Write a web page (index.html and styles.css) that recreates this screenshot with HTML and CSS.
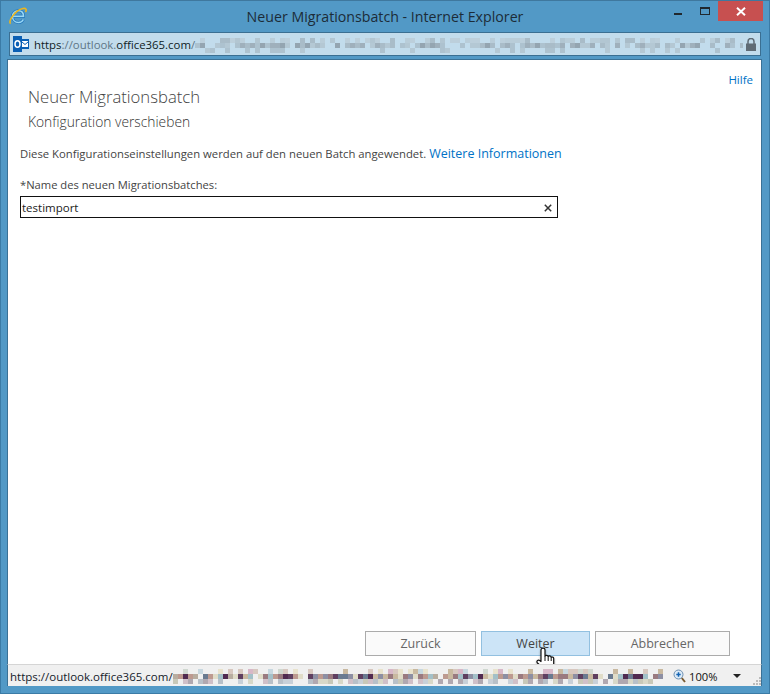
FILE: index.html
```html
<!DOCTYPE html>
<html lang="de">
<head>
<meta charset="utf-8">
<title>Neuer Migrationsbatch - Internet Explorer</title>
<link rel="stylesheet" href="styles.css">
</head>
<body>
<div class="window">
  <header class="titlebar">
    <div class="tb-left">
      <svg class="ie-icon" width="18" height="18" viewBox="0 0 18 18"><path d="M4 9.200h10.500C14.500 5.700 12.500 3.700 9.500 3.700 6 3.700 3.500 6.200 3.500 9.500c0 3.500 2.500 6 6 6 2.300 0 4-1.200 4.800-3" fill="none" stroke="#2478bd" stroke-width="3"/><path d="M4 9.200h10.500C14.500 5.700 12.500 3.700 9.500 3.700 6 3.700 3.500 6.200 3.500 9.500c0 3.500 2.500 6 6 6 2.300 0 4-1.200 4.800-3" fill="none" stroke="#9ad8f5" stroke-width="1.500"/><path d="M1.600 16.600C-1 14.500 6 3.200 14 1.500c3-.6 4 1 2.500 3.500" fill="none" stroke="#eeb61c" stroke-width="1.600"/></svg>
    </div>
    <h1 class="tb-title">Neuer Migrationsbatch - Internet Explorer</h1>
    <div class="tb-controls">
      <span class="ctl-min"></span>
      <span class="ctl-max"></span>
      <span class="ctl-close"><svg width="10" height="9" viewBox="0 0 10 9"><path d="M1 .8l8 7.400M9 .8L1 8.200" stroke="#fff" stroke-width="2"/></svg></span>
    </div>
  </header>

  <div class="addressbar">
    <svg class="o365" width="16" height="16" viewBox="0 0 16 16"><rect x="6" y="3" width="10" height="10" fill="#0a5fb4"/><rect x="9" y="5" width="6" height="6" fill="#fff"/><path d="M9 6l3 2.500L15 6" fill="none" stroke="#0a5fb4"/><rect width="9" height="16" fill="#0a5fb4"/><ellipse cx="4.500" cy="8" rx="2.500" ry="3.300" fill="none" stroke="#fff" stroke-width="1.500"/></svg>
    <span class="url"><span class="u-dark">https</span><span class="u-dim">://outlook.</span><span class="u-dark">office365.com</span><span class="u-dim">/</span></span>
    <div class="mosaic mosaic-addr" id="addr-mosaic"></div>
    <svg class="lock" width="10" height="13" viewBox="0 0 10 13"><path d="M2 6V3.500a3 3 0 0 1 6 0V6" fill="none" stroke="#5f6b75" stroke-width="1.500"/><rect y="5.500" width="10" height="7.500" fill="#5f6b75"/></svg>
  </div>

  <main class="content">
    <a class="help" href="#">Hilfe</a>
    <div class="heading">
      <h2 class="h-main">Neuer Migrationsbatch</h2>
      <p class="h-sub">Konfiguration verschieben</p>
    </div>
    <p class="desc">Diese Konfigurationseinstellungen werden auf den neuen Batch angewendet. <a class="more" href="#">Weitere Informationen</a></p>
    <label class="field-label">*Name des neuen Migrationsbatches:</label>
    <div class="field">
      <span class="field-value">testimport</span>
      <svg width="8" height="8" viewBox="0 0 8 8"><path d="M.8.800l6.400 6.400M7.200.800L.8 7.200" stroke="#333" stroke-width="1.500"/></svg>
    </div>
    <div class="spacer"></div>
    <div class="actions">
      <button class="btn btn-back">Zurück</button>
      <button class="btn btn-next">Weiter</button>
      <button class="btn btn-cancel">Abbrechen</button>
    </div>
    <svg class="cursor" width="20" height="24" viewBox="0 0 20 24"><path d="M5 3c0-2.500 4-2.500 4 0v6c.5-1 3-1 3.200.5.500-1 2.800-.8 3 .8.800-.6 2.500-.3 2.500 1.200V17c0 2.500-1 3.500-1.500 5.500H7.500C6 20 4 18.500 1.500 16c-1.500-1.700.5-3.700 2.200-2.500L5 14.500z" fill="#fff" stroke="#111" stroke-width="1.200" stroke-linejoin="round"/><path d="M9 9v5M12.200 9.500V14M15.200 10.300V14" stroke="#111" stroke-width="1"/></svg>
  </main>

  <footer class="statusbar">
    <span class="status-url">https://outlook.office365.com/</span>
    <div class="mosaic mosaic-status" id="status-mosaic"></div>
    <svg class="zoom-icon" width="13" height="14" viewBox="0 0 13 14"><circle cx="5.500" cy="5.500" r="4.500" fill="#dbeaf7" stroke="#6d8fb0"/><path d="M3.300 5.500h4.400M5.500 3.300v4.400" stroke="#1464b4" stroke-width="1.500"/><path d="M8.800 9l3.200 4" stroke="#7a5a30" stroke-width="2"/></svg>
    <span class="zoom-value">100%</span>
    <span class="zoom-arrow"></span>
    <svg class="grip" width="9" height="9" viewBox="0 0 9 9"><path d="M7 1h2v2H7zM4 4h2v2H4zM7 4h2v2H7zM1 7h2v2H1zM4 7h2v2H4zM7 7h2v2H7z" fill="#bbb"/></svg>
  </footer>
</div>
<script src="mosaic.js"></script>
</body>
</html>
```

FILE: styles.css
```css
* { box-sizing: border-box; }
html, body { margin: 0; padding: 0; }
body { width: 770px; height: 694px; overflow: hidden; font-family: "Open Sans", "Noto Sans", sans-serif; }

.window {
  width: 770px;
  height: 694px;
  display: flex;
  flex-direction: column;
  background: #5299c6;
  border: 1px solid #3b7ba6;
  border-top-color: #3f789e;
  position: relative;
}

.titlebar {
  height: 31px;
  display: grid;
  grid-template-columns: 1fr auto 1fr;
  align-items: start;
  flex: none;
}
.tb-left { padding: 6px 0 0 8px; }
.ie-icon { display: block; }
.tb-title {
  margin: 7px 0 0;
  font-size: 14.200px;
  line-height: 18px;
  font-weight: 400;
  color: #1c2c38;
  white-space: nowrap;
}
.tb-controls { display: flex; justify-content: flex-end; align-items: flex-start; margin-right: 6px; }
.ctl-min { width: 8px; height: 2px; background: #20282e; margin: 12px 18px 0 0; }
.ctl-max { width: 10px; height: 8px; border: 1px solid #20282e; border-top-width: 2px; margin: 6px 8px 0 0; }
.ctl-close { width: 45px; height: 20px; background: #c75050; display: flex; align-items: center; justify-content: center; }
.ctl-close svg { display: block; }

.addressbar {
  margin: 0 8px 0 8px;
  height: 24px;
  flex: none;
  display: flex;
  align-items: center;
  background: #c2dcec;
  border: 1px solid #3a6f92;
  padding-left: 3px;
}
.o365 { flex: none; display: block; }
.url { margin-left: 5px; font-size: 11.400px; white-space: nowrap; flex: none; width: 161px; }
.u-dark { color: #0f1c26; }
.u-dim { color: #5e7686; }
.mosaic { overflow: hidden; flex: none; }
.mosaic svg { display: block; }
.mosaic-addr { width: 548px; height: 20px; }
.lock { flex: none; margin-left: 3px; display: block; }

.content {
  margin: 3px 7px 0 6px;
  flex: 1;
  min-height: 0;
  background: #fff;
  border: 1px solid #3a7196;
  border-bottom: none;
  display: flex;
  flex-direction: column;
  padding: 0 0 8px 12px;
  position: relative;
}
.help { align-self: flex-end; margin: 11px 8px 0 0; font-size: 11.500px; line-height: 17px; color: #0072c6; text-decoration: none; }
.heading { padding-left: 8px; margin-top: -3px; }
.h-main { margin: 0; font-size: 16.700px; line-height: 24px; font-weight: 300; color: #444; white-space: nowrap; }
.h-sub { margin: 3px 0 0; font-size: 13.800px; line-height: 20px; font-weight: 300; color: #333; white-space: nowrap; }
.desc { margin: 13px 0 0; font-size: 11.300px; line-height: 17px; color: #444; white-space: nowrap; }
.more { color: #0072c6; text-decoration: none; font-size: 12.500px; }
.field-label { display: block; margin-top: 15px; font-size: 11.200px; line-height: 16px; color: #444; white-space: nowrap; }
.field {
  margin-top: 3px;
  width: 538px;
  height: 22px;
  border: 1px solid #111;
  display: flex;
  align-items: center;
  justify-content: space-between;
  padding: 1px 5px 0 1px;
}
.field svg { display: block; }
.field-value { font-size: 11.500px; color: #222; }
.spacer { flex: 1; }
.actions { display: flex; gap: 5px; padding-left: 345px; }
.btn {
  height: 25px;
  border: 1px solid #ababab;
  background: #fafafa;
  color: #666;
  font-family: inherit;
  font-size: 12.500px;
  padding: 0;
}
.btn-back { width: 111px; }
.btn-next { width: 109px; background: #cce4f7; border-color: #92c0e0; color: #444; }
.btn-cancel { width: 135px; }
.cursor { position: absolute; left: 528px; top: 587px; filter: drop-shadow(0 1px 1px rgba(0, 0, 0, .35)); }

.statusbar {
  height: 22px;
  flex: none;
  margin: 0 7px 7px 6px;
  background: #f0f0f0;
  border: 1px solid #3a7196;
  border-top: 1px solid #d5d5d5;
  border-bottom: none;
  display: flex;
  align-items: center;
  padding: 1px 0 0 2px;
  position: relative;
}
.status-url { font-size: 11.500px; color: #14202a; white-space: nowrap; flex: none; width: 163px; }
.mosaic-status { width: 490px; height: 15px; margin-right: 5px; }
.zoom-icon { flex: none; margin-left: 5px; display: block; }
.zoom-value { font-size: 11.200px; color: #111; margin-left: 3px; flex: none; }
.zoom-arrow { flex: none; width: 0; height: 0; border: 4px solid transparent; border-top: 4px solid #222; border-bottom: none; margin-left: 16px; }
.grip { flex: none; margin-left: 11px; align-self: flex-end; margin-bottom: 1px; display: block; }
```

FILE: mosaic.js
```js
// Draws the blurred (pixelated) parts of the URLs as a deterministic grid of blocks.
(function () {
  var NS = "http://www.w3.org/2000/svg";
  function rng(seed) {
    return function () {
      seed = (seed * 1664525 + 1013904223) % 4294967296;
      return seed / 4294967296;
    };
  }
  function draw(id, opts) {
    var host = document.getElementById(id);
    var w = host.clientWidth, h = host.clientHeight;
    var svg = document.createElementNS(NS, "svg");
    svg.setAttribute("width", w);
    svg.setAttribute("height", h);
    var r = rng(opts.seed);
    opts.rows.forEach(function (row, i) {
      var y = opts.top + i * opts.size;
      for (var x = 0; x < w; x += opts.size) {
        var v = r();
        var c = row.colors[Math.floor(r() * row.colors.length)];
        if (v < row.skip) continue;
        var rect = document.createElementNS(NS, "rect");
        rect.setAttribute("x", x);
        rect.setAttribute("y", y);
        rect.setAttribute("width", opts.size);
        rect.setAttribute("height", opts.size);
        rect.setAttribute("fill", c);
        svg.appendChild(rect);
      }
    });
    host.appendChild(svg);
  }
  draw("addr-mosaic", {
    seed: 7, size: 5, top: 4,
    rows: [
      { skip: 0.45, colors: ["#b9cdd9", "#b2c6d2", "#a9bcc8", "#bccfdb"] },
      { skip: 0.25, colors: ["#a9bcc8", "#9fb0bc", "#b4c8d4", "#94a5b1", "#adc2cf"] },
      { skip: 0.8, colors: ["#b4c8d4", "#adc2cf"] }
    ]
  });
  draw("status-mosaic", {
    seed: 11, size: 5, top: 0,
    rows: [
      { skip: 0.55, colors: ["#d8c8c0", "#c8d8e0", "#e9e3cd", "#c9b9a0", "#d8b8c8", "#d0d8d0"] },
      { skip: 0.03, colors: ["#8d8fa3", "#b8ada0", "#5f3f60", "#a3c0c8", "#9a7a80", "#6a7a90", "#bd9a90", "#502a50", "#c9b9a0", "#e0dcc8"] },
      { skip: 0.4, colors: ["#c8d0d8", "#d8d8c8", "#b8c0c8", "#d0c0c8", "#c8c8b8", "#b0a8b0"] }
    ]
  });
})();
```
